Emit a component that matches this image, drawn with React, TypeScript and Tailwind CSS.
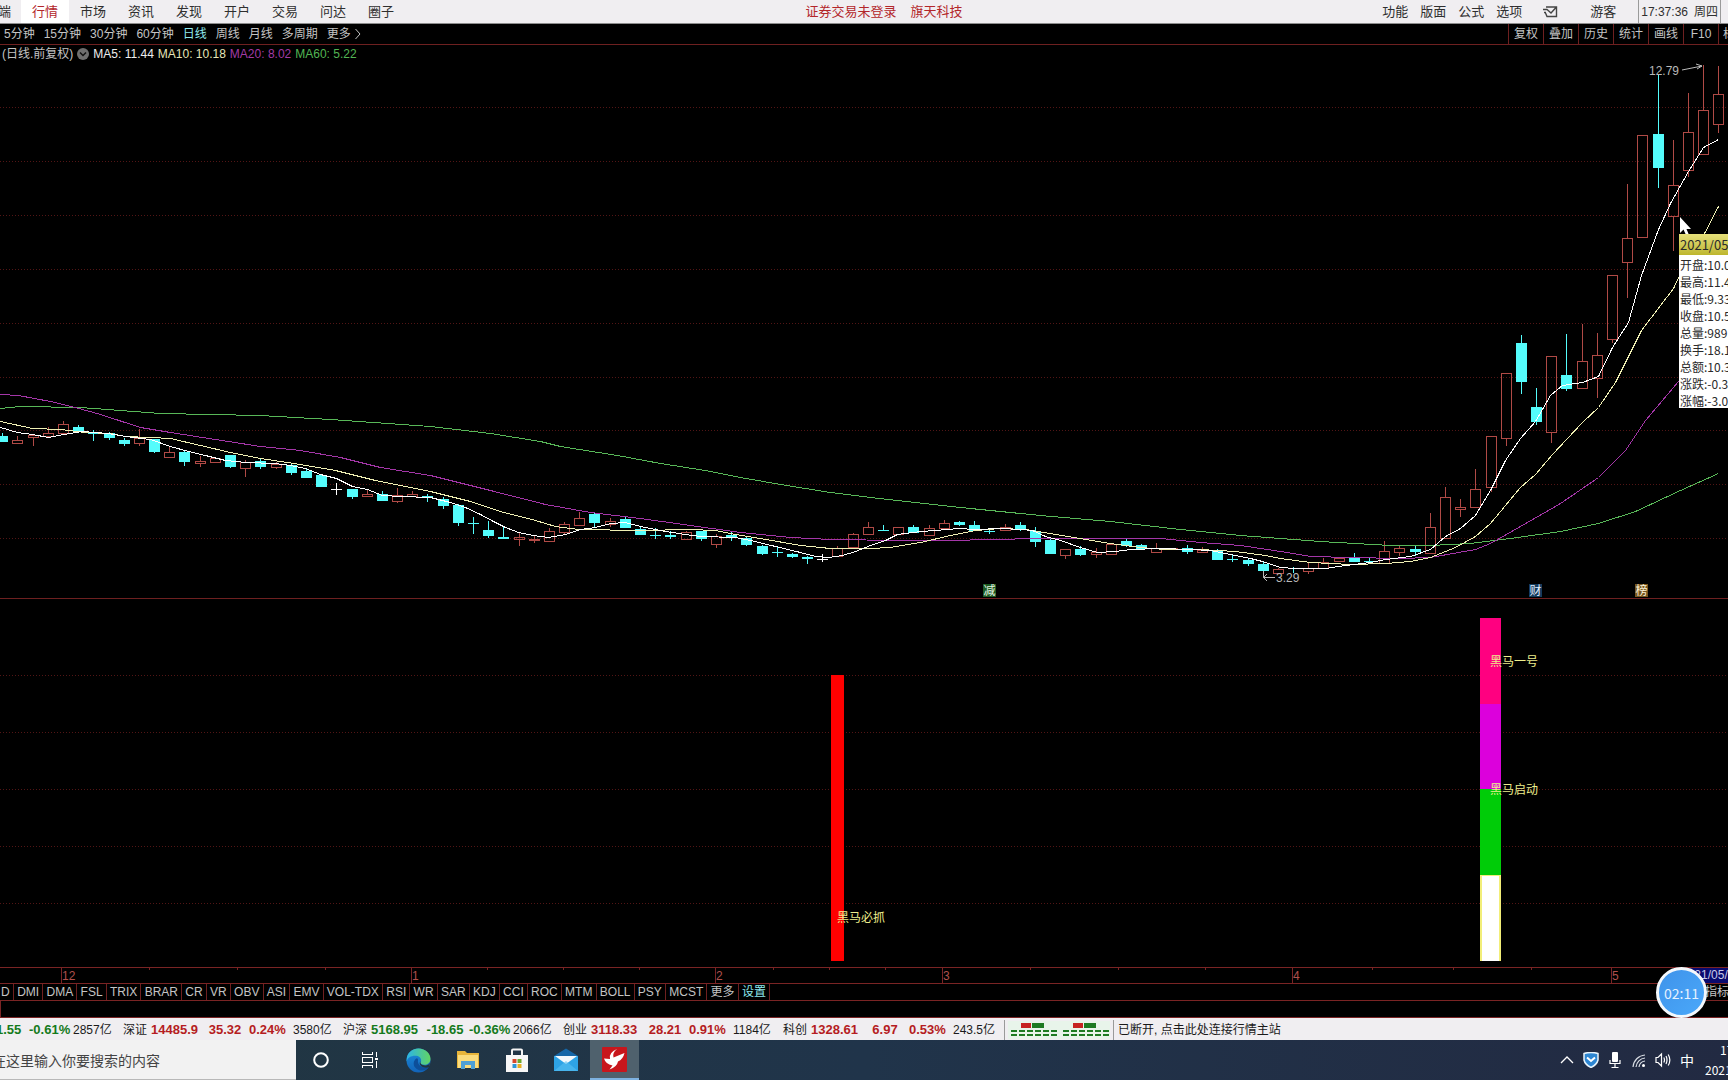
import React from "react";

type Candle = [kind: "u" | "d" | "w", high: number, top: number, bottom: number, low: number];

const CANDLES: Candle[] = [
  ["d", 433, 436, 442, 442], ["u", 436, 440, 443, 444], ["u", 434, 435, 437, 446], ["u", 427, 433, 436, 436],
  ["u", 421, 424, 433, 433], ["d", 425, 427, 432, 433], ["d", 430, 432, 434, 441], ["d", 432, 433, 438, 440],
  ["d", 438, 440, 444, 446], ["u", 429, 438, 443, 446], ["d", 439, 439, 452, 453], ["u", 447, 452, 457, 457],
  ["d", 450, 452, 462, 466], ["u", 456, 461, 463, 467], ["u", 457, 458, 462, 462], ["d", 455, 455, 467, 468],
  ["u", 460, 462, 468, 477], ["d", 459, 461, 467, 469], ["u", 462, 464, 467, 469], ["d", 463, 465, 473, 475],
  ["d", 469, 471, 478, 478], ["d", 474, 475, 487, 487], ["w", 483, 489, 490, 495], ["d", 489, 489, 497, 499],
  ["u", 490, 494, 496, 496], ["d", 491, 494, 501, 501], ["u", 488, 495, 501, 503], ["u", 491, 494, 496, 496],
  ["d", 494, 496, 497, 502], ["d", 497, 499, 506, 509], ["d", 504, 505, 523, 526], ["d", 517, 523, 524, 534],
  ["d", 521, 530, 536, 538], ["d", 526, 537, 539, 539], ["u", 532, 537, 539, 546], ["u", 536, 539, 540, 543],
  ["u", 528, 531, 541, 541], ["u", 522, 524, 532, 535], ["u", 512, 518, 525, 525], ["d", 513, 514, 523, 527],
  ["u", 518, 521, 524, 527], ["d", 517, 519, 528, 528], ["d", 527, 529, 535, 535], ["d", 528, 535, 536, 539],
  ["d", 531, 535, 537, 539], ["u", 531, 532, 539, 539], ["d", 531, 531, 539, 541], ["u", 534, 536, 544, 548],
  ["d", 531, 535, 537, 541], ["d", 537, 538, 545, 546], ["d", 545, 546, 554, 555], ["d", 547, 552, 553, 557],
  ["d", 553, 554, 557, 558], ["d", 556, 557, 559, 564], ["w", 554, 559, 560, 562], ["u", 546, 548, 556, 556],
  ["u", 533, 534, 547, 547], ["u", 522, 527, 534, 534], ["d", 525, 530, 531, 531], ["u", 527, 527, 534, 535],
  ["d", 525, 527, 533, 533], ["u", 525, 528, 535, 535], ["u", 520, 523, 528, 528], ["d", 521, 522, 525, 526],
  ["d", 521, 525, 531, 531], ["d", 528, 531, 532, 534], ["u", 524, 527, 530, 530], ["d", 522, 525, 529, 531],
  ["d", 527, 531, 542, 547], ["d", 539, 540, 554, 554], ["u", 549, 549, 555, 559], ["d", 546, 549, 555, 556],
  ["u", 548, 552, 554, 558], ["u", 544, 544, 554, 554], ["d", 539, 541, 546, 547], ["d", 544, 545, 549, 549],
  ["u", 543, 548, 552, 552], ["u", 548, 548, 549, 549], ["d", 545, 548, 552, 554], ["u", 547, 550, 552, 552],
  ["d", 549, 551, 560, 560], ["d", 554, 559, 560, 562], ["d", 558, 560, 564, 566], ["d", 562, 564, 571, 576],
  ["u", 568, 569, 573, 573], ["d", 567, 568, 569, 573], ["u", 563, 568, 571, 574], ["u", 558, 562, 568, 568],
  ["u", 557, 558, 561, 561], ["d", 553, 557, 562, 562], ["d", 558, 561, 562, 564], ["u", 541, 551, 563, 563],
  ["u", 545, 548, 552, 556], ["d", 546, 549, 552, 556], ["u", 513, 527, 553, 553], ["u", 487, 497, 538, 538],
  ["u", 499, 507, 509, 517], ["u", 469, 489, 507, 507], ["u", 436, 436, 487, 492], ["u", 373, 373, 438, 446],
  ["d", 335, 343, 382, 394], ["d", 388, 407, 422, 425], ["u", 356, 356, 432, 443], ["d", 334, 375, 389, 391],
  ["u", 324, 361, 388, 388], ["u", 333, 355, 378, 398], ["u", 275, 275, 339, 343], ["u", 184, 238, 262, 298],
  ["u", 135, 135, 237, 237], ["d", 74, 134, 168, 188], ["u", 140, 185, 216, 251], ["u", 93, 132, 170, 177],
  ["u", 65, 110, 154, 154], ["u", 66, 94, 124, 133],
];

const STEP = 15.187;

const MA5 =
  "0,427 17,432 32,434 48,437 63,434 82,431 108,433 125,436 150,439 170,446 188,451 205,455 225,460 245,462 275,463 290,465 305,468 320,474 336,478 352,486 367,489 382,495 400,496 430,497 450,502 465,507 480,514 493,521 505,527 518,532 533,535 548,537 565,534 580,529 595,527 610,523 625,522 640,526 655,529 665,531 685,534 700,536 735,537 750,540 775,546 800,552 815,556 828,557 842,555 855,551 870,545 885,540 897,534 920,531 935,530 958,528 975,529 1000,528 1020,529 1032,530 1045,536 1060,540 1080,547 1097,552 1115,551 1130,549 1160,548 1190,549 1210,550 1230,554 1250,558 1262,561 1280,567 1295,568 1325,568 1345,565 1370,562 1385,559 1410,556 1430,549 1445,536 1460,528 1475,515 1490,490 1505,460 1520,438 1535,421 1550,395 1562,385 1582,382 1598,376 1612,347 1628,322 1641,275 1658,229 1670,203 1688,171 1703,147 1718,139";
const MA10 =
  "0,421 32,428 60,429 85,432 110,433 125,436 150,437 170,438 200,445 230,452 260,458 300,464 335,470 375,480 410,487 430,491 470,501 500,511 535,520 555,526 578,529 640,530 690,529 715,530 735,534 760,538 800,545 830,548 870,548 890,547 920,542 950,535 975,530 1000,528 1025,529 1050,533 1085,539 1110,543 1140,547 1165,549 1200,549 1235,551 1265,555 1280,558 1310,562 1350,564 1385,563 1410,561 1430,557 1455,547 1475,536 1490,523 1520,487 1535,474 1552,454 1582,422 1598,407 1615,382 1641,330 1673,288 1688,257 1703,235 1718,206";
const MA20 =
  "0,394 18,395 50,401 75,407 100,414 140,427 170,432 215,439 260,446 300,450 340,457 380,467 430,475 490,490 545,504 590,512 640,518 690,525 740,532 790,537 830,539 900,540 950,540 990,539 1040,538 1110,538 1160,538 1200,542 1240,545 1280,551 1310,556 1350,557 1400,558 1430,557 1475,549 1490,543 1520,526 1560,503 1598,477 1625,450 1645,420 1678,381 1718,330";
const MA60 =
  "0,408 20,406 80,407 160,413 260,415 330,419 430,426 490,433 540,441 560,446 617,455 660,463 705,470 740,477 780,484 830,492 870,497 960,507 1040,515 1110,521 1180,529 1240,535 1320,541 1390,545 1430,545 1470,543 1510,538 1560,531 1598,523 1635,511 1680,490 1718,473";

const CN = "font-['Liberation_Sans','Noto_Sans_CJK_SC',sans-serif]";
const SVG_FONT = "'Liberation Sans','Noto Sans CJK SC',sans-serif";

function TopBar() {
  return (
    <header className="relative flex h-6 items-stretch border-b border-[#8c8c8c] bg-[#f0eef1] text-[13px] text-[#2f2f2f]">
      <nav className="flex flex-1 overflow-hidden">
        <button className="flex w-[21px] shrink-0 items-center justify-end overflow-hidden pr-2.5">端</button>
        <button className="w-12 bg-white text-[#b3262a]">行情</button>
        {["市场", "资讯", "发现", "开户", "交易", "问达", "圈子"].map((m) => (
          <button key={m} className="w-12 shrink-0">{m}</button>
        ))}
      </nav>
      <div className="flex items-center gap-3.5 pl-10 text-[#b3262a]">
        <button>证券交易未登录</button>
        <button>旗天科技</button>
      </div>
      <div className="flex flex-1 items-center justify-end">
        <div className="flex items-center gap-3">
          <button>功能</button>
          <button>版面</button>
          <button>公式</button>
          <button>选项</button>
        </div>
        <button aria-label="消息" className="ml-5 mr-8">
          <svg width="16" height="12" viewBox="0 0 16 12" fill="none" stroke="#444" strokeWidth="1.4">
            <path d="M4 1H14.500V10.500H5L3.500 7M1 3.500H5M4.500 3 9 7 14 1.500M2 6.500H4" />
          </svg>
        </button>
        <button>游客</button>
        <div className="ml-[22px] mr-[7px] flex h-full items-center gap-1.5 border-x border-[#9a9a9a] px-0.5 text-xs">
          <span>17:37:36</span>
          <span>周四</span>
        </div>
      </div>
    </header>
  );
}

function PeriodBar() {
  return (
    <div className="flex h-[21px] items-stretch justify-between border-b border-[#6e2020] text-xs text-[#c4c4c4]">
      <nav className="flex items-center gap-[9px] pl-1">
        {["5分钟", "15分钟", "30分钟", "60分钟"].map((p) => (
          <button key={p}>{p}</button>
        ))}
        <button className="text-[#8fe9ee]">日线</button>
        {["周线", "月线", "多周期"].map((p) => (
          <button key={p}>{p}</button>
        ))}
        <button className="flex items-center gap-1">
          更多
          <svg width="6" height="12" viewBox="0 0 6 12" fill="none" stroke="#c4c4c4">
            <path d="M.5 1 5 6 .5 11" />
          </svg>
        </button>
      </nav>
      <nav className="flex overflow-hidden">
        {["复权", "叠加", "历史", "统计", "画线", "F10"].map((b) => (
          <button key={b} className="w-[35px] border-l border-[#6e2020]">{b}</button>
        ))}
        <button className="w-2.5 overflow-hidden whitespace-nowrap border-l border-[#6e2020] pl-1 text-left">标</button>
      </nav>
    </div>
  );
}

function Legend() {
  return (
    <div className="flex h-[18px] items-center gap-1 pl-0.5 text-xs text-[#c4c4c4]">
      <span>(日线.前复权)</span>
      <button aria-label="展开">
        <svg width="12" height="12" viewBox="0 0 12 12">
          <circle cx="6" cy="6" r="6" fill="#6f6f6f" />
          <path d="M3 4.500 6 7.500 9 4.500" fill="none" stroke="#111" strokeWidth="1.500" />
        </svg>
      </button>
      <span className="text-[#eeeeee]">MA5: 11.44</span>
      <span className="text-[#e6e6b8]">MA10: 10.18</span>
      <span className="text-[#a33ba6]">MA20: 8.02</span>
      <span className="text-[#53b553]">MA60: 5.22</span>
    </div>
  );
}

function Grid({ rows }: { rows: number[] }) {
  return (
    <g stroke="#521515" strokeDasharray="1 2" shapeRendering="crispEdges">
      {rows.map((y) => (
        <path key={y} d={`M0 ${y}.5H1728`} />
      ))}
    </g>
  );
}

function Badge({ x, fill, color, children }: { x: number; fill: string; color: string; children: string }) {
  return (
    <g>
      <rect x={x} y="584" width="13" height="13" fill={fill} />
      <text x={x + 0.5} y="595" fontSize="12" fill={color}>{children}</text>
    </g>
  );
}

function PriceChart() {
  return (
    <svg viewBox="0 63 1728 536" className="block w-full" fontFamily={SVG_FONT}>
      <Grid rows={[107, 161, 215, 269, 323, 377, 430, 484, 538]} />
      <g shapeRendering="crispEdges">
        {CANDLES.map(([kind, high, top, bottom, low], i) => {
          const x = Math.round(2.2 + i * STEP);
          if (kind === "u")
            return (
              <g key={i} stroke="#b04a46" fill="none">
                {high < top && <path d={`M${x + 0.5} ${high}V${top}`} />}
                {low > bottom && <path d={`M${x + 0.5} ${bottom}V${low}`} />}
                <rect x={x - 4.5} y={top + 0.5} width="10" height={bottom - top} />
              </g>
            );
          const color = kind === "w" ? "#ffffff" : "#54fcfc";
          return (
            <g key={i} fill={color}>
              <rect x={x} y={high} width="1" height={low - high} />
              <rect x={x - 5} y={top} width="11" height={bottom - top} />
            </g>
          );
        })}
      </g>
      <g fill="none" shapeRendering="crispEdges" transform="translate(0.5 0.5)">
        <polyline points={MA60} stroke="#58b858" />
        <polyline points={MA20} stroke="#a436a8" />
        <polyline points={MA10} stroke="#f0f0b4" />
        <polyline points={MA5} stroke="#ffffff" />
      </g>
      <text x="1649" y="75" fontSize="12" fill="#b9b9b9">12.79</text>
      <path d="M1682 70 1702 66M1696 64 1702 66 1697 69" fill="none" stroke="#b9b9b9" />
      <text x="1276" y="582" fontSize="12" fill="#b9b9b9">3.29</text>
      <path d="M1263.500 571V577.500H1275M1267 574 1263.500 577.500 1267 581" fill="none" stroke="#b9b9b9" />
      <Badge x={983} fill="#1d5a22" color="#e4f5e4">减</Badge>
      <Badge x={1529} fill="#143a5c" color="#e0eefc">财</Badge>
      <Badge x={1635} fill="#76561f" color="#fdf3d8">榜</Badge>
      <path d="M0 598.500H1728" stroke="#6e2020" />
      <path d="M1680 217V233L1683.500 229.500 1686 235H1689L1686.500 229H1691Z" fill="#fff" />
    </svg>
  );
}

const QUOTE = ["开盘:10.0", "最高:11.4", "最低:9.33", "收盘:10.5", "总量:989", "换手:18.1", "总额:10.3", "涨跌:-0.3", "涨幅:-3.0"];

function QuoteTip() {
  return (
    <div className="absolute right-0 top-[171px] w-[49px] overflow-hidden whitespace-nowrap bg-white font-['Noto_Sans_CJK_SC',sans-serif] text-xs text-[#2a2a2a]">
      <div className="h-[21px] bg-linear-to-b from-[#e6e07a] to-[#bdb62c] pl-px text-[13px] leading-[21px]">2021/05/</div>
      {QUOTE.map((q) => (
        <div key={q} className="h-[17px] pl-px leading-[20px]">{q}</div>
      ))}
    </div>
  );
}

function SignalChart() {
  return (
    <svg viewBox="0 599 1728 368" className="block w-full" fontFamily={SVG_FONT}>
      <Grid rows={[675, 732, 789, 846, 903]} />
      <rect x="831" y="675" width="13" height="286" fill="#ff0000" />
      <rect x="1480" y="618" width="21" height="86" fill="#ff0080" />
      <rect x="1480" y="704" width="21" height="85" fill="#dc00dc" />
      <rect x="1480" y="789" width="21" height="86" fill="#00cc08" />
      <rect x="1480" y="875" width="21" height="86" fill="#f2ee78" />
      <rect x="1482" y="876" width="17" height="85" fill="#ffffff" />
      <g fontSize="12" fill="#eeee8c">
        <text x="1490" y="666">黑马一号</text>
        <text x="1490" y="794">黑马启动</text>
        <text x="837" y="922">黑马必抓</text>
      </g>
    </svg>
  );
}

const MONTHS: [number, string][] = [[61, "12"], [411, "1"], [715, "2"], [942, "3"], [1292, "4"], [1611, "5"]];
const TICKS = [149, 237, 325, 487, 563, 639, 773, 829, 885, 1030, 1118, 1205, 1372, 1453, 1531];

function TimeAxis() {
  return (
    <svg viewBox="0 967 1728 16" className="block w-full" fontFamily={SVG_FONT} fontSize="12">
      <g stroke="#7a2424" shapeRendering="crispEdges">
        <path d="M0 967.500H1728" />
        {MONTHS.map(([x]) => (
          <path key={x} d={`M${x}.5 968V983`} />
        ))}
        {TICKS.map((x) => (
          <path key={x} d={`M${x}.5 968V970`} />
        ))}
      </g>
      {MONTHS.map(([x, label]) => (
        <text key={x} x={x + 1} y="980" fill="#b0504c">{label}</text>
      ))}
      <rect x="1680" y="968" width="48" height="15" fill="#0a0a6e" />
      <text x="1681" y="979" fill="#c8c8e8">2021/05/</text>
    </svg>
  );
}

const INDICATORS = [
  "DMI", "DMA", "FSL", "TRIX", "BRAR", "CR", "VR", "OBV", "ASI", "EMV", "VOL-TDX", "RSI", "WR", "SAR", "KDJ", "CCI",
  "ROC", "MTM", "BOLL", "PSY", "MCST", "更多",
];

function IndicatorBar() {
  return (
    <div className="flex h-[17px] items-stretch justify-between border-t border-[#7a2424] text-xs leading-4 text-[#c4c4c4]">
      <nav className="flex w-[770px]">
        <button className="w-3.5 border-r border-[#6e2020] pl-px text-left">D</button>
        {INDICATORS.map((n) => (
          <button key={n} className="grow border-r border-[#6e2020] px-0.5 text-center">{n}</button>
        ))}
        <button className="grow border-r border-[#6e2020] px-0.5 text-center text-[#8fe9ee]">设置</button>
      </nav>
      <button className="w-[23px] overflow-hidden whitespace-nowrap text-left">指标</button>
    </div>
  );
}

const INDEXES = [
  { name: "深证", value: "14485.9", change: "35.32", pct: "0.24%", volume: "3580亿", up: true },
  { name: "沪深", value: "5168.95", change: "-18.65", pct: "-0.36%", volume: "2066亿", up: false },
  { name: "创业", value: "3118.33", change: "28.21", pct: "0.91%", volume: "1184亿", up: true },
  { name: "科创", value: "1328.61", change: "6.97", pct: "0.53%", volume: "243.5亿", up: true },
];

function StatusBar() {
  return (
    <div className="flex h-[22px] items-center whitespace-nowrap bg-[#f0eef1] pt-0.5 text-xs text-[#1a1a1a]">
      <div className="flex w-[123px] shrink-0 items-center">
        <b className="flex w-[29px] justify-start overflow-hidden text-[13px] text-[#147a1c]"><span className="-ml-1">1.55</span></b>
        <b className="w-11 text-[13px] text-[#147a1c]">-0.61%</b>
        <span>2857亿</span>
      </div>
      {INDEXES.map((x) => {
        const tone = x.up ? "text-[#b51c22]" : "text-[#147a1c]";
        return (
          <div key={x.name} className="flex w-[220px] shrink-0 items-center">
            <span className="w-7">{x.name}</span>
            <b className={"w-[50px] text-[13px] " + tone}>{x.value}</b>
            <b className={"w-12 text-center text-[13px] " + tone}>{x.change}</b>
            <b className={"w-11 text-[13px] " + tone}>{x.pct}</b>
            <span>{x.volume}</span>
          </div>
        );
      })}
      <div className="ml-px flex h-full items-center border-x border-[#9a9a9a] px-[3px]">
        <svg width="102" height="18" viewBox="0 0 102 18" shapeRendering="crispEdges">
          <rect width="102" height="18" fill="#e8f4ea" />
          {[0, 52].map((dx) => (
            <g key={dx} transform={`translate(${dx} 0)`}>
              <rect x="13" y="2" width="10" height="5" fill="#c62222" />
              <rect x="24" y="2" width="12" height="5" fill="#1d7a22" />
              <path d="M3 10H49M3 14H49" stroke="#1d7a22" strokeWidth="2" strokeDasharray="6 2" />
            </g>
          ))}
        </svg>
      </div>
      <button className="ml-1">已断开, 点击此处连接行情主站</button>
    </div>
  );
}

function TaskButton({ label, active, children }: { label: string; active?: boolean; children: React.ReactNode }) {
  return (
    <button
      aria-label={label}
      className={"flex h-10 w-[49px] items-center justify-center " + (active ? "border-b-2 border-[#7eb2e0] bg-[#4f616d]" : "")}
    >
      {children}
    </button>
  );
}

function Taskbar() {
  return (
    <footer className="flex h-10 items-center bg-linear-to-r from-[#213640] via-[#20344a] to-[#222a42] font-['Noto_Sans_CJK_SC',sans-serif]">
      <input
        aria-label="搜索"
        placeholder="在这里输入你要搜索的内容"
        className="h-10 w-[296px] shrink-0 border-b border-[#b8b8b8] bg-[#f2f2f2] indent-[-8px] text-sm placeholder:text-[#444444]"
      />
      <TaskButton label="Cortana">
        <svg width="18" height="18" viewBox="0 0 18 18"><circle cx="9" cy="9" r="6.800" fill="none" stroke="#fff" strokeWidth="2" /></svg>
      </TaskButton>
      <TaskButton label="任务视图">
        <svg width="18" height="18" viewBox="0 0 18 18" fill="none" stroke="#fff" shapeRendering="crispEdges">
          <path d="M1.500 1V3.500H11.500V1M1.500 17V14.500H11.500V17M1.500 6.500H11.500V11.500H1.500ZM15.500 1V6M15.500 10V17" />
          <path d="M14 7H17V9H14Z" fill="#fff" stroke="none" />
        </svg>
      </TaskButton>
      <TaskButton label="Edge">
        <svg width="25" height="25" viewBox="0 0 24 24">
          <defs>
            <linearGradient id="edgeTop" x1="0" x2="1"><stop offset="0" stopColor="#2bb4e8" /><stop offset="1" stopColor="#62d562" /></linearGradient>
            <linearGradient id="edgeLow" x1="0" y1="0" x2="0" y2="1"><stop offset="0" stopColor="#1b8fdc" /><stop offset="1" stopColor="#1263b8" /></linearGradient>
          </defs>
          <circle cx="12" cy="12" r="11.500" fill="url(#edgeLow)" />
          <path d="M.6 11C1 4.500 6 .5 12 .5c7 0 11.500 5 11.500 9.700 0 4-3 5.800-6 5.800-2 0-4-.8-3.500-1.800C15.500 11.500 14 8 10 7.500 5.500 7 1.500 9 .6 13Z" fill="url(#edgeTop)" />
          <path d="M10 10c-3 2-3.500 6-1 9 2.500 3 7 3.500 11 1.500 1-.5 1.500-1.500 1.800-2.500-5 2-11-1-10.300-6 .2-1.500-.5-2.500-1.500-2Z" fill="#0d4f9a" />
          <path d="M13.800 12.500c-.8 3 2.500 4.800 6.200 4 1.800-.4 2.800-1.500 3.300-3L22 18.500c-6 1.500-10.500-2-8.200-6Z" fill="#213640" />
        </svg>
      </TaskButton>
      <TaskButton label="文件资源管理器">
        <svg width="22" height="20" viewBox="0 0 22 20">
          <path d="M0 1H8L10 3H22V18H0Z" fill="#e8b53a" />
          <path d="M1 5H21V18H1Z" fill="#fbdc7c" />
          <path d="M4 19V11H18V19H14V15H8V19Z" fill="#4ea0d6" />
          <path d="M8 15H14V18H8Z" fill="#fbdc7c" />
        </svg>
      </TaskButton>
      <TaskButton label="Microsoft Store">
        <svg width="24" height="25" viewBox="0 0 24 25">
          <path d="M7 8V2.500Q7 1.500 8 1.500H16Q17 1.500 17 2.500V8" fill="none" stroke="#f4f4f4" strokeWidth="2" />
          <path d="M1 7H23V24H1Z" fill="#f7f7f7" />
          <path d="M7.500 11H11.500V15H7.500Z" fill="#d8482c" /><path d="M12.500 11H16.500V15H12.500Z" fill="#6ca82c" />
          <path d="M7.500 16H11.500V20H7.500Z" fill="#2d96d8" /><path d="M12.500 16H16.500V20H12.500Z" fill="#e8ae20" />
        </svg>
      </TaskButton>
      <TaskButton label="邮件">
        <svg width="24" height="24" viewBox="0 0 24 24">
          <path d="M0 8 12 .5 24 8V12H0Z" fill="#1667a8" />
          <path d="M0 8H24V23H0Z" fill="#2ea3e6" />
          <path d="M1 8H23L12 16Z" fill="#f4f8fb" />
          <path d="M0 23 12 13 24 23Z" fill="#58c0f2" opacity=".6" />
        </svg>
      </TaskButton>
      <TaskButton label="行情软件" active>
        <svg width="25" height="25" viewBox="0 0 25 25">
          <rect width="25" height="25" rx="1" fill="#c8161c" />
          <path d="M15 2Q10 6 11.500 10.500L22.500 6Q21 12.500 16 14.500 15 20 7.500 22.500L10.500 18.500Q3.500 17 2 11.500L8 12Q6.500 5.500 15 2Z" fill="#fff" />
        </svg>
      </TaskButton>
      <div className="ml-auto flex items-center gap-2 text-white">
        <button aria-label="显示隐藏的图标">
          <svg width="16" height="16" viewBox="0 0 16 16" fill="none" stroke="#fff" strokeWidth="1.300"><path d="M2 11 8 5 14 11" /></svg>
        </button>
        <button aria-label="安全卫士">
          <svg width="16" height="16" viewBox="0 0 16 16">
            <path d="M1 1.500Q8-.5 15 1.500V8Q14 12.500 8 15.500 2 12.500 1 8Z" fill="#2d86d2" stroke="#e8f4fc" strokeWidth="1.500" />
            <path d="M4 5.500 8 9 12 5.500" fill="none" stroke="#fff" strokeWidth="2" />
          </svg>
        </button>
        <button aria-label="麦克风">
          <svg width="16" height="18" viewBox="0 0 16 18">
            <rect x="5" y="1" width="6" height="10" rx="1" fill="#fff" />
            <path d="M3 9V12.500H13V9M8 12.500V16M4.500 16.500H11.500" fill="none" stroke="#fff" strokeWidth="1.200" />
          </svg>
        </button>
        <button aria-label="网络">
          <svg width="16" height="16" viewBox="0 0 16 16" fill="none" stroke="#d8dde4" strokeWidth="1.200">
            <path d="M2 15A13 13 0 0 1 14 3M5 15A10 10 0 0 1 14 6M8 15A7 7 0 0 1 14 9" />
            <circle cx="12.500" cy="13.500" r="1.500" fill="#fff" stroke="none" />
          </svg>
        </button>
        <button aria-label="音量">
          <svg width="16" height="16" viewBox="0 0 16 16" fill="none" stroke="#fff" strokeWidth="1.200">
            <path d="M1 5.500H3L6.500 2V14L3 10.500H1ZM8.800 5.500Q10.200 8 8.800 10.500M11 4Q13 8 11 12M13.200 2.500Q16.500 8 13.200 13.500" />
          </svg>
        </button>
        <button className="w-4 text-sm leading-4">中</button>
        <button className="ml-0.5 w-[23px] overflow-hidden whitespace-nowrap text-left text-xs leading-5">
          <span className="block pl-[15px]">17</span>
          <span className="block">2021</span>
        </button>
      </div>
    </footer>
  );
}

export default function App() {
  return (
    <div className={"flex min-h-screen flex-col overflow-hidden bg-black " + CN}>
      <TopBar />
      <PeriodBar />
      <Legend />
      <div className="relative">
        <PriceChart />
        <QuoteTip />
      </div>
      <SignalChart />
      <div className="relative">
        <TimeAxis />
        <IndicatorBar />
        <div className="h-[18px] border-b border-l border-t border-[#7a2424]" />
        <div className="absolute right-[21px] top-0 flex size-[51px] items-center justify-center rounded-full border-[3px] border-[#f4f8fc] bg-linear-to-br from-[#3f93ea] to-[#4aa8fa] font-['Noto_Sans_CJK_SC',sans-serif] text-sm text-[#e4f1ff]">
          02:11
        </div>
      </div>
      <StatusBar />
      <Taskbar />
    </div>
  );
}
